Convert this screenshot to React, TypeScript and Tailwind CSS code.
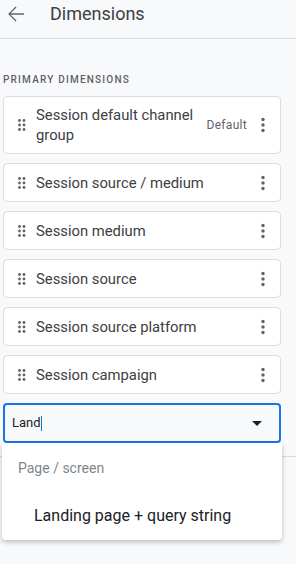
const dims = [
  "Session source / medium",
  "Session medium",
  "Session source",
  "Session source platform",
  "Session campaign",
];

function Dots() {
  // six-dot drag handle
  return (
    <svg width="8" height="12" viewBox="0 0 8 12" className="shrink-0 text-[#5f6368]">
      {[1.5, 6, 10.5].map((y) =>
        [1.5, 6].map((x) => <circle key={`${x}-${y}`} cx={x} cy={y} r="1.4" fill="currentColor" />)
      )}
    </svg>
  );
}

function Kebab() {
  return (
    <svg width="4" height="16" viewBox="0 0 4 16" className="shrink-0 text-[#5f6368]">
      <circle cx="2" cy="2.5" r="1.7" fill="currentColor" />
      <circle cx="2" cy="8" r="1.7" fill="currentColor" />
      <circle cx="2" cy="13.5" r="1.7" fill="currentColor" />
    </svg>
  );
}

export default function App() {
  return (
    <div className="w-[296px] h-[564px] bg-[#f8f9fa] overflow-hidden font-['Roboto',sans-serif] text-[#3c4043]">
      {/* Header */}
      <div className="h-[39px] border-b border-[#dadce0] flex items-start">
        <svg width="24" height="24" viewBox="0 0 24 24" className="ml-[4px] mt-[2px] text-[#5f6368]">
          <path
            fill="currentColor"
            d="M20 11.3H6.6l5.9-5.9-0.9-0.9L4.1 12l7.5 7.5 0.9-0.9-5.9-5.9H20z"
          />
        </svg>
        <span className="ml-[22px] mt-[5px] text-[18px] leading-[18px] text-[#3c4043]">Dimensions</span>
      </div>

      <div className="relative">
        <div className="pt-[35px] pl-[3px] text-[10px] tracking-[1.2px] font-medium text-[#5f6368] leading-[12px]">
          PRIMARY DIMENSIONS
        </div>

        <div className="mt-[10px] pl-[3px] pr-[15px] flex flex-col gap-[9px]">
          <div className="h-[58px] bg-white border border-[#dadce0] rounded-[4px] flex items-center pl-[14px] pr-[15px]">
            <Dots />
            <span className="ml-[10px] text-[14.8px] leading-[20px] w-[165px] text-[#3c4043]">
              Session default channel group
            </span>
            <span className="ml-auto text-[12px] text-[#5f6368] tracking-[0.3px]">Default</span>
            <span className="ml-[14px]"><Kebab /></span>
          </div>
          {dims.map((d) => (
            <div key={d} className="h-[39px] bg-white border border-[#dadce0] rounded-[4px] flex items-center pl-[14px] pr-[15px]">
              <Dots />
              <span className="ml-[10px] text-[14.8px] leading-[20px] text-[#3c4043]">{d}</span>
              <span className="ml-auto"><Kebab /></span>
            </div>
          ))}
          {/* Input */}
          <div className="h-[40px] border-2 border-[#1a73e8] rounded-[4px] flex items-center pl-[7px] pr-[17px]">
            <span className="text-[13px] text-[#202124]">Land</span>
            <span className="w-[1px] h-[15px] bg-[#1a73e8]" />
            <span className="ml-auto w-0 h-0 border-l-[5px] border-r-[5px] border-t-[5px] border-l-transparent border-r-transparent border-t-[#202124]" />
          </div>
        </div>

        <div className="mt-[13px] border-t border-[#dadce0]" />

        {/* Dropdown menu */}
        <div className="absolute left-[2px] top-[404px] w-[280px] h-[97px] bg-white rounded-b-[4px] shadow-[0_2px_5px_rgba(0,0,0,0.25)]">
          <div className="pt-[15px] pl-[16px] text-[14px] text-[#80868b]">Page / screen</div>
          <div className="pt-[25px] pl-[32px] text-[16px] text-[#202124]">Landing page + query string</div>
        </div>
      </div>
    </div>
  );
}
